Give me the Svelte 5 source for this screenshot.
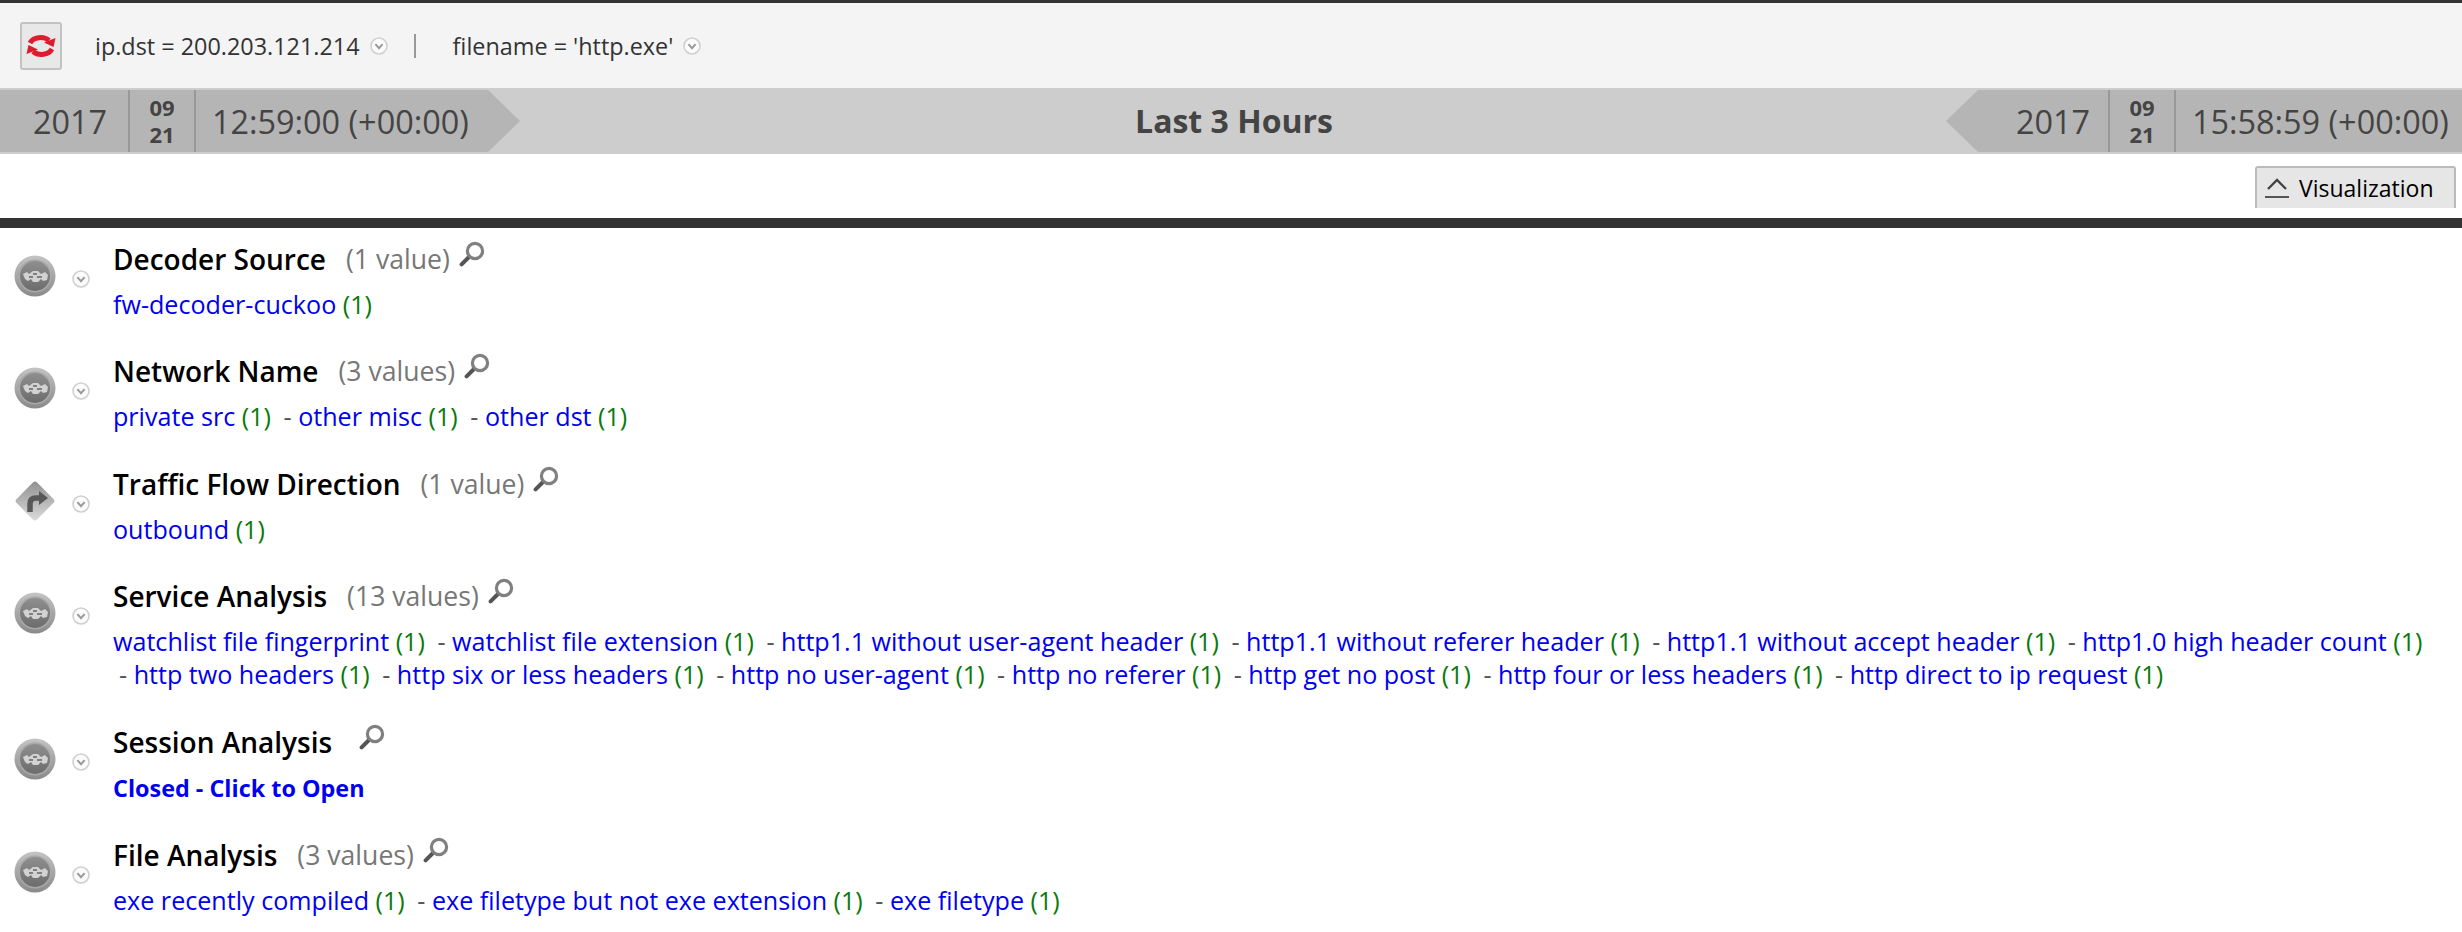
<script lang="ts">
	type Section = {
		name: string;
		icon: 'net' | 'turn';
		count: string;
		closed?: boolean;
		values: string[];
	};

	const sections: Section[] = [
		{ name: 'Decoder Source', icon: 'net', count: '(1 value)', values: ['fw-decoder-cuckoo'] },
		{ name: 'Network Name', icon: 'net', count: '(3 values)', values: ['private src', 'other misc', 'other dst'] },
		{ name: 'Traffic Flow Direction', icon: 'turn', count: '(1 value)', values: ['outbound'] },
		{
			name: 'Service Analysis',
			icon: 'net',
			count: '(13 values)',
			values: [
				'watchlist file fingerprint',
				'watchlist file extension',
				'http1.1 without user-agent header',
				'http1.1 without referer header',
				'http1.1 without accept header',
				'http1.0 high header count',
				'http two headers',
				'http six or less headers',
				'http no user-agent',
				'http no referer',
				'http get no post',
				'http four or less headers',
				'http direct to ip request'
			]
		},
		{ name: 'Session Analysis', icon: 'net', count: '', closed: true, values: [] },
		{
			name: 'File Analysis',
			icon: 'net',
			count: '(3 values)',
			values: ['exe recently compiled', 'exe filetype but not exe extension', 'exe filetype']
		}
	];
</script>

{#snippet chevron()}
	<svg class="chev" viewBox="0 0 18 18" width="18" height="18">
		<circle cx="9" cy="9" r="8" fill="#fbfbfb" stroke="#d0d0d0" stroke-width="1.6" />
		<path d="M5.4 7.2 L9 11.2 L12.6 7.2" fill="none" stroke="#9a9a9a" stroke-width="2" />
	</svg>
{/snippet}

{#snippet lens()}
	<svg class="lens" viewBox="0 0 26 26" width="26" height="26">
		<path d="M10 16 L2.6 23.4" stroke="#555" stroke-width="4" stroke-linecap="round" />
		<circle cx="16" cy="10" r="7.6" fill="#fff" stroke="#808080" stroke-width="3.2" />
	</svg>
{/snippet}

{#snippet stamp(month: string, day: string)}
	<span class="date"><span>{month}</span><span>{day}</span></span>
{/snippet}

<svg class="defs" width="0" height="0" aria-hidden="true">
	<defs>
		<linearGradient id="rim" x1="0" y1="0" x2="0" y2="1">
			<stop offset="0" stop-color="#c4c4c4" />
			<stop offset="1" stop-color="#8a8a8a" />
		</linearGradient>
		<linearGradient id="core" x1="0" y1="0" x2="0" y2="1">
			<stop offset="0" stop-color="#8f8f8f" />
			<stop offset="1" stop-color="#6c6c6c" />
		</linearGradient>
		<linearGradient id="plate" x1="0" y1="0" x2="1" y2="1">
			<stop offset="0" stop-color="#8f8f8f" />
			<stop offset="1" stop-color="#dcdcdc" />
		</linearGradient>
	</defs>
</svg>

<div class="page">
	<header class="toolbar">
		<button class="refresh" aria-label="Refresh">
			<svg viewBox="0 0 30 26" width="30" height="26">
				<path d="M4 10 A11.5 9 0 0 1 23 7.5" fill="none" stroke="#de1c2e" stroke-width="5" />
				<path d="M26 16 A11.5 9 0 0 1 7 18.5" fill="none" stroke="#de1c2e" stroke-width="5" />
				<path d="M18 9.5 L29.5 5 L27.5 14 Z" fill="#de1c2e" />
				<path d="M12 16.5 L0.5 21 L2.5 12 Z" fill="#de1c2e" />
			</svg>
		</button>
		<span class="crumb">ip.dst = 200.203.121.214</span>
		{@render chevron()}
		<span class="crumb-sep"></span>
		<span class="crumb">filename = 'http.exe'</span>
		{@render chevron()}
	</header>

	<div class="timebar">
		<div class="range start">
			<span class="year">2017</span>
			{@render stamp('09', '21')}
			<span class="time">12:59:00 (+00:00)</span>
		</div>
		<div class="span-label">Last 3 Hours</div>
		<div class="range end">
			<span class="year">2017</span>
			{@render stamp('09', '21')}
			<span class="time">15:58:59 (+00:00)</span>
		</div>
	</div>

	<div class="vis-row">
		<div class="vis-tab">
			<svg viewBox="0 0 24 24" width="24" height="24">
				<path d="M3 13 L12 4 L21 13" fill="none" stroke="#444" stroke-width="2.4" />
				<path d="M0 21 H24" stroke="#555" stroke-width="2" />
			</svg>
			Visualization
		</div>
	</div>

	<main class="results">
		{#each sections as s}
			<section class="group">
				<div class="icons">
					{#if s.icon === 'net'}
						<svg viewBox="0 0 42 42" width="42" height="42">
							<circle cx="21" cy="21" r="20.5" fill="url(#rim)" />
							<circle cx="21" cy="21" r="16.5" fill="#a8a8a8" />
							<circle cx="21" cy="21" r="15" fill="url(#core)" />
							<path d="M9 19 l4 -2 l2 2 l4 -3 l5 0 l3 3 l4 -2 l3 3 l-1 5 l-4 1 l-2 -2 l-3 3 l-5 0 l-2 -3 l-3 2 l-3 -2 z" fill="#d2d2d2" />
							<path d="M15 22 h4 M23 22 h5 M19 19 h4" stroke="#808080" stroke-width="2" />
						</svg>
					{:else}
						<svg viewBox="0 0 42 42" width="42" height="42">
							<rect x="6.5" y="6.5" width="29" height="29" rx="3" transform="rotate(45 21 21)" fill="url(#plate)" />
							<path d="M16 32 V24 Q16 18 22 18 H26" fill="none" stroke="#585858" stroke-width="5.5" />
							<path d="M25 11 L34 18 L25 25 Z" fill="#585858" />
						</svg>
					{/if}
					{@render chevron()}
				</div>
				<div class="body">
					<h3 class="title">
						<span class="name">{s.name}</span>
						{#if s.count}
							<span class="count">{s.count}</span>
						{:else}
							<span class="count-empty"></span>
						{/if}
						{@render lens()}
					</h3>
					<div class="values">
						{#if s.closed}
							<a class="open" href="#open">Closed - Click to Open</a>
						{:else}
							{#each s.values as v, i}
								<span class="item">{#if i > 0}<span class="dash">-</span>{' '}{/if}<a href="#v">{v}</a>{' '}<span class="n">(1)</span></span>{' '}
							{/each}
						{/if}
					</div>
				</div>
			</section>
		{/each}
	</main>
</div>

<style>
	:global(body) {
		margin: 0;
		background: #fff;
	}

	.defs {
		display: block;
		height: 0;
	}

	.page {
		width: 2462px;
		height: 932px;
		overflow: hidden;
		font-family: 'Open Sans', sans-serif;
		color: #333;
	}

	.toolbar {
		height: 85px;
		border-top: 3px solid #333;
		background: #f4f4f4;
		display: flex;
		align-items: center;
		padding-left: 20px;
		font-size: 23.4px;
	}

	.refresh {
		width: 42px;
		height: 48px;
		padding: 0;
		margin: 0 33px 0 0;
		border: 2px solid #c2c2c2;
		border-radius: 3px;
		background: #e8e8e8;
		display: flex;
		align-items: center;
		justify-content: center;
	}

	.crumb {
		color: #333;
	}

	.chev {
		flex: none;
		margin-left: 10px;
	}

	.crumb-sep {
		width: 2px;
		height: 24px;
		background: #999;
		margin: 0 37px 0 26px;
	}

	.timebar {
		height: 66px;
		background: #cdcdcd;
		display: flex;
		padding: 2px 0;
		box-sizing: border-box;
		color: #444;
	}

	.range {
		display: flex;
		align-items: center;
		background: #b5b5b5;
		font-size: 32.4px;
	}

	.start {
		width: 520px;
		clip-path: polygon(0 0, 488px 0, 100% 50%, 488px 100%, 0 100%);
	}

	.end {
		width: 516px;
		padding-left: 32px;
		box-sizing: border-box;
		clip-path: polygon(32px 0, 100% 0, 100% 100%, 32px 100%, 0 50%);
	}

	.year {
		width: 128px;
		text-align: center;
		padding-left: 12px;
		box-sizing: border-box;
	}

	.end .year {
		width: 130px;
		padding-left: 20px;
	}

	.date {
		align-self: stretch;
		width: 64px;
		border: solid #999;
		border-width: 0 2px;
		font-size: 22px;
		font-weight: 700;
		line-height: 27px;
		display: flex;
		flex-direction: column;
		justify-content: center;
		align-items: center;
	}

	.time {
		padding-left: 16px;
		white-space: nowrap;
	}

	.span-label {
		flex: 1;
		text-align: center;
		font-size: 32px;
		font-weight: 700;
		line-height: 62px;
		padding-left: 2px;
	}

	.vis-row {
		height: 74px;
		display: flex;
		justify-content: flex-end;
		align-items: flex-end;
		padding: 0 6px 10px 0;
		box-sizing: border-box;
		border-bottom: 10px solid #333;
	}

	.vis-tab {
		width: 201px;
		height: 42px;
		box-sizing: border-box;
		background: #e6e6e6;
		border: 2px solid #bbb;
		border-bottom: 0;
		border-radius: 3px 3px 0 0;
		display: flex;
		align-items: center;
		gap: 10px;
		padding-left: 8px;
		font-size: 23px;
		color: #000;
	}

	.results {
		padding-top: 9px;
	}

	.group {
		display: flex;
		margin-bottom: 27.8px;
	}

	.icons {
		width: 113px;
		flex: none;
		box-sizing: border-box;
		padding: 18px 0 0 14px;
		display: flex;
		align-items: flex-start;
		gap: 16px;
	}

	.icons .chev {
		margin: 15px 0 0;
	}

	.title {
		margin: 0 0 7px;
		height: 44px;
		display: flex;
		align-items: center;
		font-size: 26.6px;
		font-weight: 400;
	}

	.name {
		color: #000;
		font-size: 28px;
		font-weight: 600;
	}

	.count {
		margin-left: 20px;
		color: #777;
	}

	.count-empty {
		width: 18px;
	}

	.lens {
		margin: -10px 0 0 9px;
	}

	.values {
		font-size: 25.12px;
		line-height: 33.5px;
		width: 2340px;
		color: #666;
		min-height: 33.5px;
	}

	.item {
		white-space: nowrap;
	}

	.values a {
		color: #0000f0;
		text-decoration: none;
	}

	.values .open {
		font-size: 23.4px;
		font-weight: 700;
	}

	.dash {
		color: #555;
		margin-left: 6px;
	}

	.n {
		color: #0a7a0a;
	}
</style>
